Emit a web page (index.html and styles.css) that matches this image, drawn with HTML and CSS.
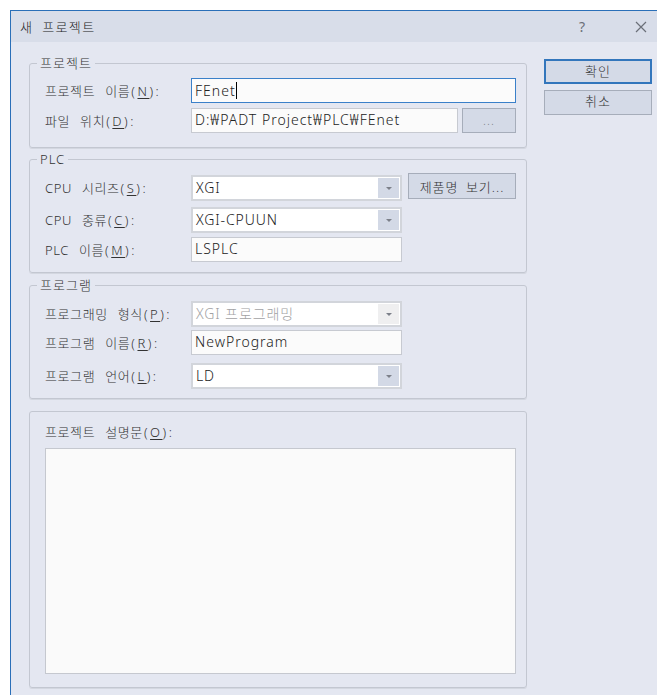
FILE: index.html
```html
<!DOCTYPE html>
<html lang="ko">
<head>
<meta charset="utf-8">
<title>새 프로젝트</title>
<link rel="stylesheet" href="styles.css">
</head>
<body>
<div class="window">
  <div class="titlebar">
    <span class="title">새 프로젝트</span>
    <span class="help">?</span>
    <svg class="close" width="12" height="12" viewBox="0 0 12 12"><path d="M1 1L11 11M11 1L1 11" stroke="#6b6f78" stroke-width="1.2" fill="none"/></svg>
  </div>
  <div class="dialog-body">
    <div class="groups">
      <fieldset class="group g-project">
        <legend>프로젝트</legend>
        <div class="row">
          <span class="label">프로젝트 이름<span class="key">(<u>N</u>):</span></span>
          <div class="field focused wide">FEnet<span class="caret"></span></div>
        </div>
        <div class="row row-gap5">
          <span class="label">파일 위치<span class="key">(<u>D</u>):</span></span>
          <div class="field path">D:₩PADT Project₩PLC₩FEnet</div>
          <button class="btn browse">...</button>
        </div>
      </fieldset>

      <fieldset class="group g-plc">
        <legend>PLC</legend>
        <div class="row">
          <span class="label">CPU 시리즈<span class="key">(<u>S</u>):</span></span>
          <div class="combo"><span class="value">XGI</span><span class="drop"><i></i></span></div>
          <button class="btn product">제품명 보기...</button>
        </div>
        <div class="row row-gap6">
          <span class="label">CPU 종류<span class="key">(<u>C</u>):</span></span>
          <div class="combo"><span class="value">XGI-CPUUN</span><span class="drop"><i></i></span></div>
        </div>
        <div class="row row-gap4">
          <span class="label">PLC 이름<span class="key">(<u>M</u>):</span></span>
          <div class="field short">LSPLC</div>
        </div>
      </fieldset>

      <fieldset class="group g-program">
        <legend>프로그램</legend>
        <div class="row">
          <span class="label">프로그래밍 형식<span class="key">(<u>P</u>):</span></span>
          <div class="combo disabled"><span class="value">XGI 프로그래밍</span><span class="drop"><i></i></span></div>
        </div>
        <div class="row row-gap3">
          <span class="label">프로그램 이름<span class="key">(<u>R</u>):</span></span>
          <div class="field short">NewProgram</div>
        </div>
        <div class="row row-gap8">
          <span class="label">프로그램 언어<span class="key">(<u>L</u>):</span></span>
          <div class="combo"><span class="value">LD</span><span class="drop"><i></i></span></div>
        </div>
      </fieldset>

      <div class="group g-desc">
        <span class="label">프로젝트 설명문<span class="key">(<u>O</u>):</span></span>
        <div class="memo"></div>
      </div>
    </div>

    <div class="actions">
      <button class="btn action default">확인</button>
      <button class="btn action">취소</button>
    </div>
  </div>
</div>
</body>
</html>
```

FILE: styles.css
```css
html, body {
  margin: 0;
  padding: 0;
  background: #ffffff;
}

body {
  font-family: "Noto Sans", "Noto Sans CJK KR", sans-serif;
  font-size: 13px;
  font-weight: 300;
  color: #333333;
}

/* dialog frame */
.window {
  margin: 10px 0 0 10px;
  height: 685px;
  box-sizing: border-box;
  border-left: 1px solid #2a6fb8;
  border-top: 1px solid #2a6fb8;
  background: #e4e7f1;
  display: flex;
  flex-direction: column;
  overflow: hidden;
}

.titlebar {
  height: 31px;
  flex: none;
  background: #d8dde9;
  display: flex;
  align-items: center;
  padding: 0 0 0 9px;
}

.title {
  font-size: 13px;
  word-spacing: 4px;
  letter-spacing: 1.4px;
  color: #222;
}

.help {
  margin-left: auto;
  margin-right: 50px;
  font-size: 14px;
  font-weight: 400;
  color: #6b6f78;
}

.close {
  margin-right: 10px;
}

/* content */
.dialog-body {
  display: flex;
  gap: 17px;
  padding: 13px 0 0 18px;
}

.groups {
  width: 498px;
  flex: none;
  display: flex;
  flex-direction: column;
}

.group {
  margin: 0;
  min-width: 0;
  border: 1px solid #c3c7d1;
  border-radius: 3px;
  box-shadow: 0 1px 0 #d3d7e0;
  padding: 0 10px 0 15px;
}

.group legend {
  padding: 0 3px;
  margin-left: -8px;
  line-height: 16px;
  font-size: 13px;
  letter-spacing: 1px;
}

.g-project { padding-top: 7px; padding-bottom: 14px; }
.g-plc { margin-top: 3px; padding-top: 8px; padding-bottom: 10px; }
.g-program { margin-top: 4px; padding-top: 8px; padding-bottom: 9px; }
.g-desc {
  margin-top: 12px;
  padding-top: 12px;
  padding-bottom: 13px;
  display: flex;
  flex-direction: column;
  gap: 8px;
}

.row {
  display: flex;
  align-items: center;
}

.row-gap3 { margin-top: 3px; }
.row-gap4 { margin-top: 4px; }
.row-gap5 { margin-top: 5px; }
.row-gap6 { margin-top: 6px; }
.row-gap8 { margin-top: 8px; }

.label {
  width: 146px;
  flex: none;
  line-height: 16px;
  word-spacing: 6px;
  letter-spacing: 0.6px;
  white-space: nowrap;
}

/* mnemonic part "(X):" is set a little looser, like the system font */
.label .key {
  letter-spacing: 2.5px;
  margin-left: 1px;
}

.label u {
  text-decoration-thickness: 1px;
  text-underline-offset: 2px;
}

/* text boxes */
.field {
  height: 25px;
  box-sizing: border-box;
  border: 1px solid #c7cad1;
  background: #fbfbfb;
  font-size: 14px;
  letter-spacing: 1px;
  line-height: 21px;
  padding: 0 3px;
  color: #222;
  white-space: nowrap;
}

.field.wide { width: 325px; }
.field.path { width: 267px; }
.field.short { width: 211px; }

.field.focused {
  border-color: #3a80c9;
  display: flex;
  align-items: center;
}

.caret {
  display: inline-block;
  width: 1px;
  height: 17px;
  background: #000;
  margin-left: 0;
}

/* drop-down lists */
.combo {
  width: 211px;
  height: 26px;
  box-sizing: border-box;
  border: 2px solid #d2d5db;
  background: #ffffff;
  display: flex;
  align-items: center;
  padding: 1px;
  font-size: 14px;
  letter-spacing: 0.9px;
  color: #222;
}

.combo .value {
  flex: 1;
  padding-left: 2px;
  line-height: 20px;
  white-space: nowrap;
}

.combo .drop {
  width: 21px;
  align-self: stretch;
  background: #d3d9e6;
  display: flex;
  align-items: center;
  justify-content: center;
}

.combo .drop i {
  width: 0;
  height: 0;
  border-left: 3px solid transparent;
  border-right: 3px solid transparent;
  border-top: 3px solid #7c8089;
}

.combo.disabled .value {
  color: #a2a2a4;
}

.combo.disabled .drop {
  background: #efeff0;
}

/* push buttons */
.btn {
  font-family: inherit;
  font-size: 13px;
  font-weight: 300;
  color: #333;
  background: #d4dae7;
  border: 1px solid #a6adba;
  border-radius: 0;
  padding: 0;
  margin: 0;
  box-sizing: border-box;
  letter-spacing: 1px;
}

.browse {
  width: 54px;
  height: 25px;
  margin-left: 4px;
  color: #7a7e86;
  font-size: 12px;
}

.product {
  width: 108px;
  height: 26px;
  margin-left: 6px;
  align-self: flex-start;
  margin-top: -2px;
  word-spacing: 3px;
}

.actions {
  width: 108px;
  display: flex;
  flex-direction: column;
  gap: 6px;
  margin-top: 4px;
}

.action {
  height: 25px;
  line-height: 21px;
  padding-bottom: 2px;
}

.action.default {
  border: 2px solid #3376bc;
}

.memo {
  width: 471px;
  height: 226px;
  box-sizing: border-box;
  border: 1px solid #c5c8cf;
  background: #fafafa;
}
```
